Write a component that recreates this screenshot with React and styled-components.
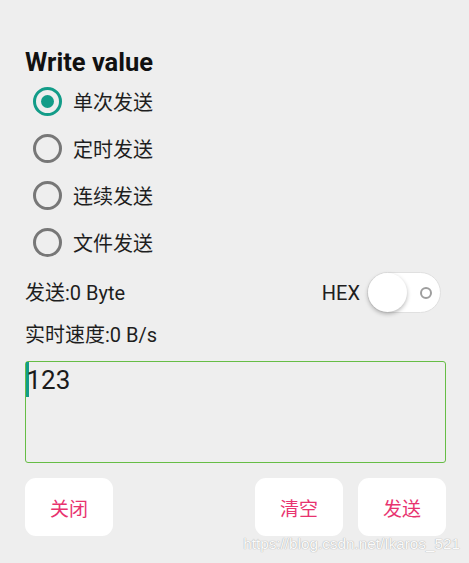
import React, { useState } from 'react';
import styled, { createGlobalStyle } from 'styled-components';

const GlobalStyle = createGlobalStyle`
  body {
    margin: 0;
    background: #eeeeee;
    font-family: Roboto, "Noto Sans CJK SC", sans-serif;
    color: #212121;
  }
`;

const Page = styled.div`
  position: relative;
  width: 469px;
  height: 563px;
  box-sizing: border-box;
  padding: 48px 23px 0 25px;
  background: #eeeeee;
  overflow: hidden;
`;

const Title = styled.h2`
  margin: 0;
  font-size: 25.5px;
  line-height: 28px;
  font-weight: 700;
  color: #111;
`;

const RadioGroup = styled.div`
  display: flex;
  flex-direction: column;
  margin-top: 2px;
  padding-left: 8px;
`;

const RadioRow = styled.label`
  display: flex;
  align-items: center;
  gap: 11px;
  height: 47px;
  font-size: 20px;
  color: #1e1e1e;
  cursor: pointer;
`;

const RadioCircle = styled.span`
  width: 29px;
  height: 29px;
  box-sizing: border-box;
  border-radius: 50%;
  border: 3px solid ${p => (p.$checked ? '#129c88' : '#777777')};
  display: flex;
  align-items: center;
  justify-content: center;
  &::after {
    content: '';
    width: 13px;
    height: 13px;
    border-radius: 50%;
    background: ${p => (p.$checked ? '#129c88' : 'transparent')};
  }
`;

const InfoRow = styled.div`
  display: flex;
  align-items: center;
  justify-content: space-between;
  margin-top: 6px;
  padding-right: 5px;
  font-size: 20px;
  line-height: 24px;
  color: #1e1e1e;
`;

const InfoText = styled.div`
  margin-top: 10px;
  font-size: 20px;
  line-height: 24px;
  color: #1e1e1e;
`;

const HexBox = styled.div`
  display: flex;
  align-items: center;
  gap: 7px;
  font-size: 20px;
`;

const Track = styled.div`
  width: 74px;
  height: 41px;
  box-sizing: border-box;
  border-radius: 21px;
  background: #ffffff;
  border: 1px solid #e0e0e0;
  display: flex;
  align-items: center;
  justify-content: space-between;
  padding: 0 8px 0 0;
`;

const Knob = styled.div`
  width: 39px;
  height: 39px;
  border-radius: 50%;
  background: #ffffff;
  box-shadow: 0 2px 4px rgba(0, 0, 0, 0.28);
`;

const Ring = styled.div`
  width: 12px;
  height: 12px;
  box-sizing: border-box;
  border-radius: 50%;
  border: 2px solid #9e9e9e;
`;

const Editor = styled.div`
  margin-top: 14px;
  height: 102px;
  box-sizing: border-box;
  border: 1.5px solid #66bd45;
  border-radius: 3px;
  padding: 1px 0 0 0;
  display: flex;
  align-items: flex-start;
  font-size: 26px;
  line-height: 35px;
  color: #1a1a1a;
`;

const Caret = styled.span`
  width: 2.5px;
  height: 35px;
  margin-top: -1px;
  margin-right: -2px;
  background: #129c88;
`;

const ButtonRow = styled.div`
  display: flex;
  gap: 15px;
  margin-top: 15px;
`;

const Spacer = styled.div`
  flex: 1;
`;

const Button = styled.button`
  width: 88px;
  height: 58px;
  border: none;
  border-radius: 11px;
  background: #ffffff;
  color: #e8336f;
  font-family: "Noto Sans CJK SC", sans-serif;
  font-size: 19px;
`;

const Watermark = styled.div`
  position: absolute;
  right: 9px;
  bottom: 10px;
  font-family: "Liberation Sans", Arial, sans-serif;
  font-size: 15.3px;
  color: #fbfbfb;
  text-shadow: 0 0 1px #a8a8a8, 0 0 1px #bcbcbc;
`;

const options = ['单次发送', '定时发送', '连续发送', '文件发送'];

export default function App() {
  const [mode, setMode] = useState(0);
  return (
    <Page>
      <GlobalStyle />
      <Title>Write value</Title>
      <RadioGroup>
        {options.map((o, i) => (
          <RadioRow key={o} onClick={() => setMode(i)}>
            <RadioCircle $checked={mode === i} />
            {o}
          </RadioRow>
        ))}
      </RadioGroup>
      <InfoRow>
        <span>发送:0 Byte</span>
        <HexBox>
          HEX
          <Track>
            <Knob />
            <Ring />
          </Track>
        </HexBox>
      </InfoRow>
      <InfoText>实时速度:0 B/s</InfoText>
      <Editor>
        <Caret />
        123
      </Editor>
      <ButtonRow>
        <Button>关闭</Button>
        <Spacer />
        <Button>清空</Button>
        <Button>发送</Button>
      </ButtonRow>
      <Watermark>https://blog.csdn.net/Ikaros_521</Watermark>
    </Page>
  );
}
